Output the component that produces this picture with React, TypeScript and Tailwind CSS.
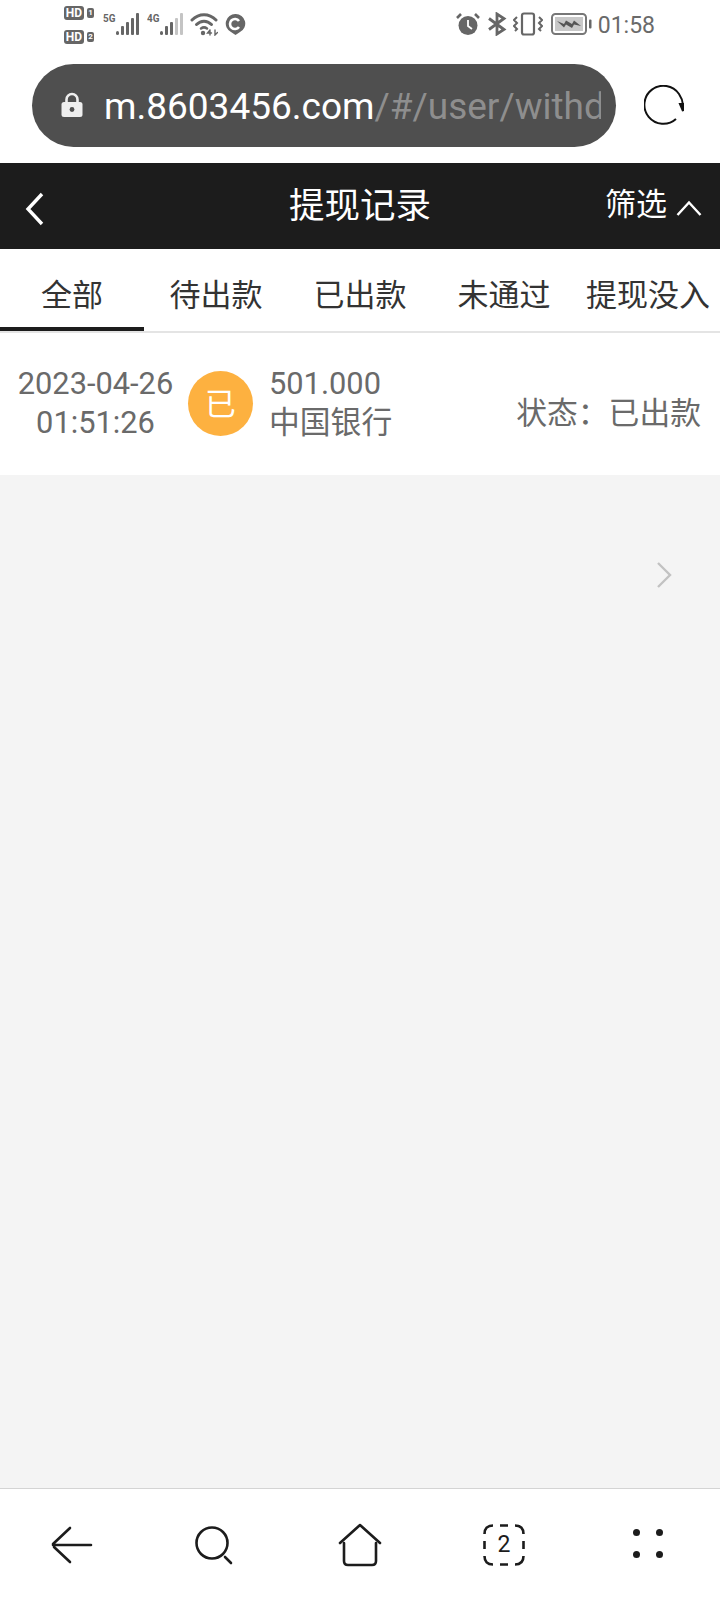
import React from 'react';

const cjk = "font-['Roboto','Noto_Sans_CJK_SC',sans-serif]";

const HdBadge = ({ n }: { n: string }) => (
  <div className="flex items-center gap-[3px]">
    <div className="w-[20px] h-[14px] rounded-[3px] bg-[#666] text-white text-[12px] leading-[14px] font-bold text-center">HD</div>
    <div className="w-[7px] h-[10px] rounded-[2px] bg-[#666] text-white text-[8px] leading-[10px] font-bold text-center">{n}</div>
  </div>
);

const Signal = ({ label, weak }: { label: string; weak?: boolean }) => (
  <div className="flex items-start">
    <span className="text-[#666] text-[11px] leading-[11px] font-bold mt-[13px] w-[13px] scale-x-90 origin-left">{label}</span>
    <svg width="23" height="24" viewBox="0 0 23 24" className="mt-[12px]">
      <rect x="0" y="19" width="3" height="4" rx="1.5" fill="#666" />
      <rect x="5" y="14" width="3" height="9" rx="1" fill="#666" />
      <rect x="10" y="10" width="3" height="13" rx="1" fill="#666" />
      <rect x="15" y="6" width="3" height="17" rx="1" fill={weak ? '#c4c4c4' : '#666'} />
      <rect x="20" y="1" width="3" height="22" rx="1" fill={weak ? '#c4c4c4' : '#666'} />
    </svg>
  </div>
);

const StatusBar = () => (
  <div className={`h-[64px] flex justify-between pl-[64px] pr-[65px] ${cjk}`}>
    <div className="flex">
      <div className="flex flex-col gap-[10px] pt-[6px] w-[39px]">
        <HdBadge n="1" />
        <HdBadge n="2" />
      </div>
      <Signal label="5G" />
      <div className="w-[8px]" />
      <Signal label="4G" weak />
      <svg width="28" height="24" viewBox="0 0 28 24" className="ml-[7px] mt-[12px]" fill="none" stroke="#666" strokeLinecap="round">
        <path d="M2 8 C9 1 19 1 26 8" strokeWidth="3" />
        <path d="M6.5 12.5 C11 8 17 8 21.5 12.5" strokeWidth="3" />
        <path d="M11 16.5 C13 15 15 15 17 16.5" strokeWidth="2.5" />
        <circle cx="13" cy="21" r="2.2" fill="#666" stroke="none" />
        <path d="M20 18 L17.5 21 H21.5 M20 18 V23 M25 18 V23 L27.5 20.5" strokeWidth="1.4" />
      </svg>
      <svg width="21" height="23" viewBox="0 0 21 23" className="ml-[7px] mt-[13px]">
        <path d="M10.5 1 A9.5 9.5 0 0 1 15 19 L10.5 22 L6 19 A9.5 9.5 0 0 1 10.5 1 Z" fill="#666" />
        <path d="M14 8 A5 5 0 1 0 14 14" fill="none" stroke="#fff" strokeWidth="2.6" />
      </svg>
    </div>
    <div className="flex">
      <svg width="24" height="24" viewBox="0 0 24 24" className="mt-[12px]">
        <circle cx="12" cy="13.5" r="9.5" fill="#666" />
        <path d="M12 8 V14 L16 17" fill="none" stroke="#fff" strokeWidth="1.8" />
        <path d="M1 6 L5 2 M23 6 L19 2" stroke="#666" strokeWidth="2.6" />
      </svg>
      <svg width="20" height="24" viewBox="0 0 20 24" className="ml-[7px] mt-[12px]" fill="none" stroke="#666" strokeWidth="2.8">
        <path d="M2 6.5 L17 17.5 L10 22 V2 L17 6.5 L2 17.5" />
      </svg>
      <svg width="30" height="24" viewBox="0 0 30 24" className="ml-[6px] mt-[12px]" fill="none" stroke="#666">
        <rect x="9" y="1.5" width="12" height="21" rx="2" strokeWidth="2.2" />
        <path d="M4 5 L1 8 L4 11 L1 14 L4 17 L2 19 M26 5 L29 8 L26 11 L29 14 L26 17 L28 19" strokeWidth="2" />
      </svg>
      <svg width="41" height="24" viewBox="0 0 41 24" className="ml-[8px] mt-[12px]">
        <rect x="1" y="2" width="34" height="20" rx="3.5" fill="#fff" stroke="#777" strokeWidth="2" />
        <rect x="4" y="5" width="28" height="14" fill="#c8c8c8" />
        <path d="M6 9 L13 12 L15 8.5 L21 12 L23 8.5 L30 14 L23 12.5 L21 16 L15 12.5 L13 15.5 Z" fill="#555" />
        <rect x="38" y="7.5" width="2.5" height="9" rx="1" fill="#666" />
      </svg>
      <span className="ml-[6px] mt-[9px] text-[23px] leading-[34px] text-[#6a6a6a]">01:58</span>
    </div>
  </div>
);

const UrlBar = () => (
  <div className="h-[99px] flex pl-[32px]">
    <div className="w-[584px] h-[83px] rounded-[42px] bg-[#4f4f4f] flex items-center pl-[29px] pr-[15px]">
      <svg width="22" height="26" viewBox="0 0 22 26" className="shrink-0 mb-[1px]">
        <path d="M5.5 11 V7.5 A5.5 5.5 0 0 1 16.5 7.5 V11" fill="none" stroke="#eee" strokeWidth="2.6" />
        <rect x="0.5" y="10" width="21" height="15" rx="2.5" fill="#eee" />
        <circle cx="11" cy="17.5" r="2.4" fill="#4f4f4f" />
      </svg>
      <div className="ml-[21px] mt-[3px] overflow-hidden whitespace-nowrap font-['Roboto',sans-serif] text-[37px] leading-[44px]">
        <span className="text-white">m.8603456.com</span>
        <span className="text-[#8e8e8e]">/#/user/withd</span>
      </div>
    </div>
    <div className="ml-[28px] mt-[21px] w-[40px] h-[40px]">
      <svg width="40" height="40" viewBox="0 0 40 40" fill="none" stroke="#111" strokeWidth="2">
        <path d="M32 34 A19 19 0 1 1 35 9 Q38.5 14 39 20" />
        <path d="M36 19 L39 26 L39.5 19 Z" fill="#111" />
      </svg>
    </div>
  </div>
);

const Header = () => (
  <div className={`h-[86px] bg-[#1c1c1c] grid grid-cols-3 items-center text-white ${cjk}`}>
    <svg width="20" height="34" viewBox="0 0 20 34" className="ml-[25px] mt-[5px]" fill="none" stroke="#fff" strokeWidth="3.4">
      <path d="M17 2 L3 17 L17 32" />
    </svg>
    <span className="text-[35.5px] leading-[48px] text-center">提现记录</span>
    <div className="flex items-center justify-end mr-[18px] mb-[2px]">
      <span className="text-[31px] leading-[40px]">筛选</span>
      <svg width="26" height="16" viewBox="0 0 26 16" className="ml-[9px] mt-[6px]" fill="none" stroke="#fff" strokeWidth="2.4">
        <path d="M1.5 15 L13 2.5 L24.5 15" />
      </svg>
    </div>
  </div>
);

const tabs = ['全部', '待出款', '已出款', '未通过', '提现没入'];

const Tabs = () => (
  <div className={`h-[84px] flex border-b-2 border-[#e4e4e4] bg-white ${cjk}`}>
    {tabs.map((t, i) => (
      <div
        key={t}
        className={`w-[144px] flex justify-center pt-[27px] text-[31px] leading-[40px] whitespace-nowrap text-[#333] ${i === 0 ? 'border-b-4 border-[#1c1c1c]' : ''}`}
      >
        {t}
      </div>
    ))}
  </div>
);

const RecordRow = () => (
  <div className={`h-[142px] bg-white flex text-[#6a6a6a] text-[30.8px] ${cjk}`}>
    <div className="w-[188px] pl-[16px] pr-[13px] pt-[31px] flex flex-col items-center leading-[39px] whitespace-nowrap">
      <span>2023-04-26</span>
      <span>01:51:26</span>
    </div>
    <div className="w-[65px] h-[65px] mt-[38px] pt-[3px] rounded-full bg-[#fdb140] text-white flex items-center justify-center leading-none">已</div>
    <div className="ml-[16px] pt-[31px] flex flex-col leading-[39px]">
      <span>501.000</span>
      <span>中国银行</span>
    </div>
    <span className="ml-auto mr-[19px] pt-[60px] leading-[41px]">状态：已出款</span>
  </div>
);

const BottomNav = () => (
  <div className="h-[112px] bg-white border-t border-[#d4d4d4] flex items-start">
    <div className="w-[144px] flex justify-center pt-[37px]">
      <svg width="42" height="38" viewBox="0 0 42 38" fill="none" stroke="#1c1c1c" strokeWidth="2.6" strokeLinecap="round">
        <path d="M40 19 H2 M19 2 L2 18 M3 21 L19 36" />
      </svg>
    </div>
    <div className="w-[144px] flex justify-center pt-[36px] pr-[4px]">
      <svg width="40" height="40" viewBox="0 0 40 40" fill="none" stroke="#1c1c1c" strokeWidth="2.6" strokeLinecap="round">
        <circle cx="18" cy="18" r="15.5" />
        <path d="M31 32 L37 38" />
      </svg>
    </div>
    <div className="w-[144px] flex justify-center pt-[34px]">
      <svg width="44" height="44" viewBox="0 0 44 44" fill="none" stroke="#1c1c1c" strokeWidth="2.6" strokeLinecap="round" strokeLinejoin="round">
        <path d="M2 20 L22 2 L42 20" />
        <path d="M6 20 V38 Q6 42 10 42 H34 Q38 42 38 38 V20" />
      </svg>
    </div>
    <div className="w-[144px] flex justify-center pt-[35px]">
      <div className="relative w-[42px] h-[42px] flex items-center justify-center font-['Roboto',sans-serif] text-[23px] text-[#1c1c1c]">
        <svg width="42" height="42" viewBox="0 0 42 42" fill="none" stroke="#1c1c1c" strokeWidth="2.6" className="absolute inset-0">
          <path d="M1.5 10 Q1.5 1.5 10 1.5 M32 1.5 Q40.5 1.5 40.5 10 M40.5 32 Q40.5 40.5 32 40.5 M10 40.5 Q1.5 40.5 1.5 32" />
          <path d="M17 1.5 H25 M17 40.5 H25 M1.5 17 V25 M40.5 17 V25" />
        </svg>
        2
      </div>
    </div>
    <div className="w-[144px] flex justify-center pt-[40px]">
      <div className="grid grid-cols-2 gap-x-[16px] gap-y-[15px]">
        <div className="w-[7px] h-[7px] rounded-full bg-[#1c1c1c]" />
        <div className="w-[7px] h-[7px] rounded-full bg-[#1c1c1c]" />
        <div className="w-[7px] h-[7px] rounded-full bg-[#1c1c1c]" />
        <div className="w-[7px] h-[7px] rounded-full bg-[#1c1c1c]" />
      </div>
    </div>
  </div>
);

export default function App() {
  return (
    <div className="w-[720px] h-[1600px] flex flex-col bg-white overflow-hidden">
      <StatusBar />
      <UrlBar />
      <Header />
      <Tabs />
      <RecordRow />
      <div className="flex-1 bg-[#f4f4f4] flex justify-end pr-[48px] pt-[86px]">
        <svg width="16" height="28" viewBox="0 0 16 28" fill="none" stroke="#c2c2c2" strokeWidth="2.4">
          <path d="M2 2 L14 14 L2 26" />
        </svg>
      </div>
      <BottomNav />
    </div>
  );
}
